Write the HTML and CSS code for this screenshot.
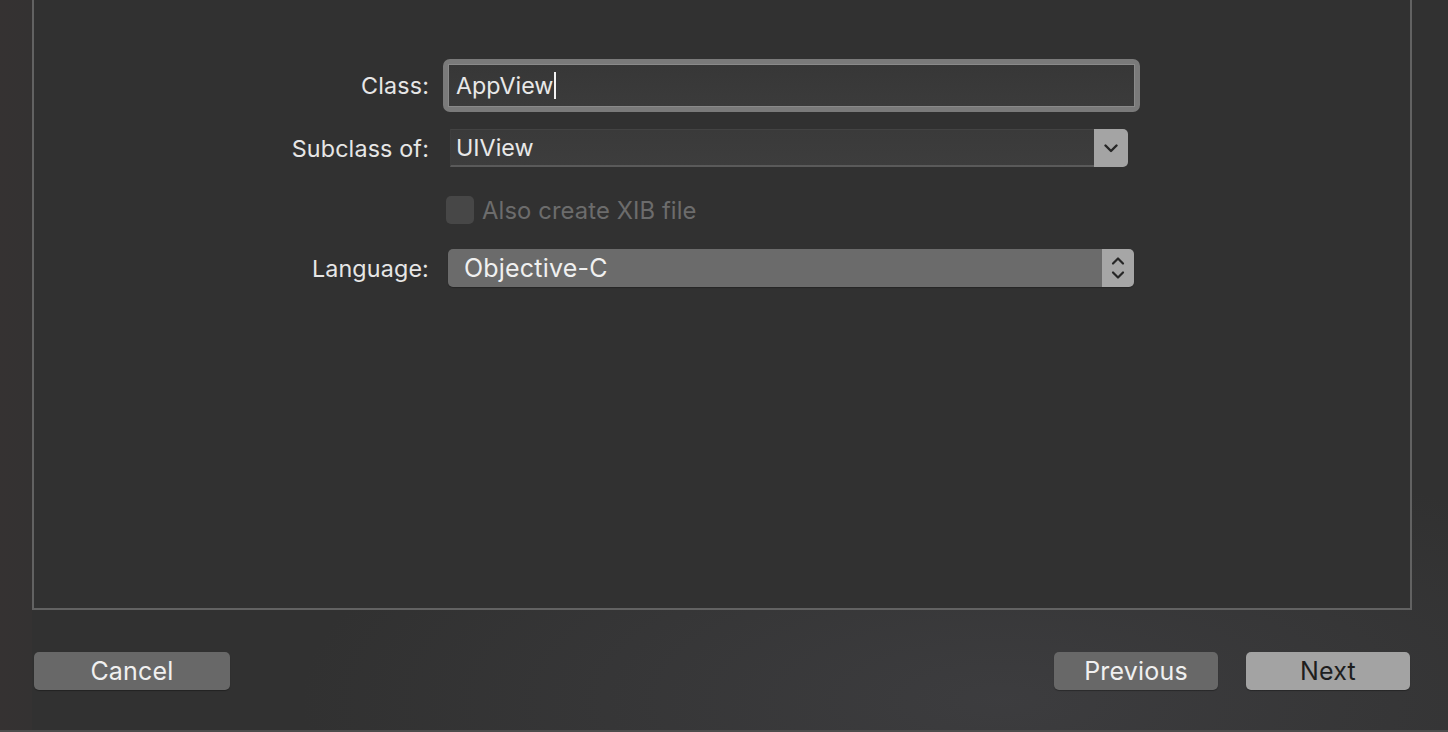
FILE: index.html
```html
<!DOCTYPE html>
<html lang="en">
<head>
<meta charset="utf-8">
<title>New File</title>
<link rel="stylesheet" href="styles.css">
</head>
<body>
<div class="window">
  <div class="panel">
    <div class="form">
      <div class="row row-class">
        <label class="label">Class:</label>
        <div class="ring">
          <div class="field field-text">AppView<span class="caret"></span></div>
        </div>
      </div>
      <div class="row row-sub">
        <label class="label">Subclass of:</label>
        <div class="combo">
          <div class="combo-text">UIView</div>
          <div class="combo-btn">
            <svg width="14" height="9" viewBox="0 0 14 9"><path d="M1.5 1.5 L7 7 L12.5 1.5" fill="none" stroke="#262626" stroke-width="2.4" stroke-linecap="round" stroke-linejoin="round"/></svg>
          </div>
        </div>
      </div>
      <div class="row row-check">
        <div class="label"></div>
        <div class="check">
          <span class="box"></span>
          <span class="check-label">Also create XIB file</span>
        </div>
      </div>
      <div class="row row-lang">
        <label class="label">Language:</label>
        <div class="popup">
          <div class="popup-text">Objective-C</div>
          <div class="popup-btn">
            <svg width="14" height="26" viewBox="0 0 14 26"><path d="M2 8.5 L7 3.5 L12 8.5" fill="none" stroke="#262626" stroke-width="2.2" stroke-linecap="round" stroke-linejoin="round"/><path d="M2 17.5 L7 22.5 L12 17.5" fill="none" stroke="#262626" stroke-width="2.2" stroke-linecap="round" stroke-linejoin="round"/></svg>
          </div>
        </div>
      </div>
    </div>
  </div>
  <div class="footer">
    <button class="btn">Cancel</button>
    <div class="spacer"></div>
    <button class="btn">Previous</button>
    <button class="btn btn-primary">Next</button>
  </div>
</div>
</body>
</html>
```
FILE: styles.css
```css
* { box-sizing: border-box; }
html, body { margin: 0; padding: 0; }
body {
  width: 1448px;
  height: 732px;
  overflow: hidden;
  font-family: Inter, "Liberation Sans", sans-serif;
  background: #313131;
}
.window {
  width: 1448px;
  height: 732px;
  display: flex;
  flex-direction: column;
  background:
    radial-gradient(ellipse 700px 260px at 1000px 700px, rgba(70,70,74,0.55), rgba(70,70,74,0) 100%),
    linear-gradient(90deg, #353232 0, #343232 32px, #313131 32px);
  border-bottom: 2px solid #4c4c4c;
}
.panel {
  margin-left: 32px;
  width: 1380px;
  height: 610px;
  flex: none;
  border: 2px solid #626262;
  border-top: none;
  background: #313131;
}
.form {
  display: flex;
  flex-direction: column;
  padding-top: 59px;
}
.row {
  display: flex;
  align-items: center;
}
.label {
  width: 395px;
  flex: none;
  text-align: right;
  color: #e6e6e6;
  font-size: 23.3px;
  letter-spacing: 0.15px;
}
.row-class { height: 53px; }
.row-sub { height: 38px; margin-top: 17px; }
.row-check { height: 28px; margin-top: 29px; }
.row-lang { height: 38px; margin-top: 25px; }

.ring {
  margin-left: 14px;
  width: 697px;
  height: 53px;
  border: 5px solid #7a7a7a;
  border-radius: 7px;
  padding: 0;
}
.field {
  height: 100%;
  border: 1px solid #8a8a8a;
  background: linear-gradient(#373737, #3b3b3b);
  color: #e8e8e8;
  font-size: 23.3px;
  padding-left: 7px;
  display: flex;
  align-items: center;
}
.caret {
  display: inline-block;
  width: 2px;
  height: 27px;
  background: #f2f2f2;
  margin-left: 1px;
}
.combo {
  margin-left: 21px;
  width: 678px;
  height: 38px;
  display: flex;
}
.combo-text {
  flex: 1;
  background: linear-gradient(#3a3a3a, #3d3d3d);
  border-top: 1px solid #434343;
  border-left: 1px solid #3e3e3e;
  border-bottom: 2px solid #5a5a5a;
  color: #e8e8e8;
  font-size: 23.3px;
  padding-left: 5px;
  display: flex;
  align-items: center;
}
.combo-btn {
  width: 34px;
  background: #a4a4a4;
  border-radius: 0 5px 5px 0;
  display: flex;
  align-items: center;
  justify-content: center;
}
.check {
  margin-left: 17px;
  display: flex;
  align-items: center;
}
.box {
  width: 28px;
  height: 28px;
  border-radius: 5px;
  background: #474747;
}
.check-label {
  margin-left: 8px;
  color: #6c6c6c;
  font-size: 23.8px;
  letter-spacing: 0.1px;
}
.popup {
  margin-left: 19px;
  width: 686px;
  height: 38px;
  display: flex;
  border-radius: 5px;
  overflow: hidden;
  box-shadow: 0 1px 1px rgba(0,0,0,0.25);
}
.popup-text {
  flex: 1;
  background: #6b6b6b;
  color: #f0f0f0;
  font-size: 25px;
  letter-spacing: 0.2px;
  padding-left: 16px;
  display: flex;
  align-items: center;
}
.popup-btn {
  width: 32px;
  background: #a6a6a6;
  display: flex;
  align-items: center;
  justify-content: center;
}
.footer {
  display: flex;
  align-items: center;
  padding: 0 38px 0 34px;
  margin-top: 42px;
}
.spacer { flex: 1; }
.btn {
  height: 38px;
  border: none;
  border-radius: 5px;
  background: #686868;
  color: #f0f0f0;
  font-family: Inter, "Liberation Sans", sans-serif;
  font-size: 25px;
  letter-spacing: 0.2px;
  padding: 0;
  width: 164px;
  box-shadow: 0 1px 1px rgba(0,0,0,0.3);
}
.btn:first-child { width: 196px; }
.btn-primary {
  margin-left: 28px;
  background: #a3a3a3;
  color: #1e1e1e;
}
```
